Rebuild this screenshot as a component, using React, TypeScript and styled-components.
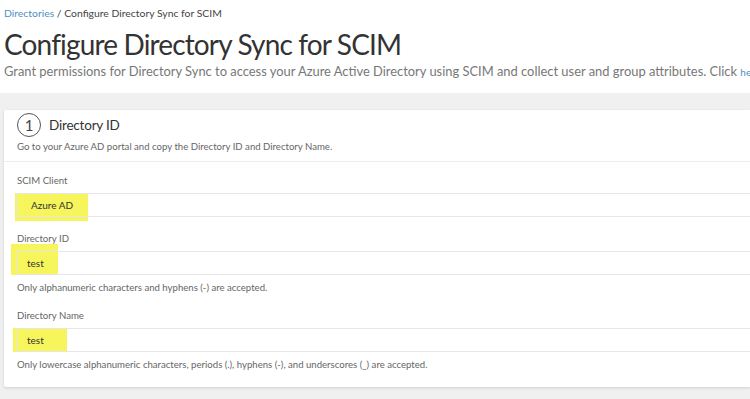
import React from 'react'
import styled, { createGlobalStyle } from 'styled-components'

const GlobalStyle = createGlobalStyle`
  body {
    margin: 0;
    background: #ffffff;
    font-family: 'Lato', 'Open Sans', sans-serif;
    overflow: hidden;
  }
`

type Mark = { left: number; top: number; width: number; height: number }

type FieldProps = {
  label: string
  value: string
  help?: string
  indent: number
  mark: Mark
}

function Field({ label, value, help, indent, mark }: FieldProps) {
  return (
    <FieldGroup>
      <Label>{label}</Label>
      <InputWrap>
        <Highlight $mark={mark} />
        <Input $indent={indent}>{value}</Input>
      </InputWrap>
      {help && <Help>{help}</Help>}
    </FieldGroup>
  )
}

function App() {
  return (
    <Page>
      <GlobalStyle />
      <Header>
        <Breadcrumb>
          <Crumb href='#'>Directories</Crumb> / Configure Directory Sync for SCIM
        </Breadcrumb>
        <Title>Configure Directory Sync for SCIM</Title>
        <Subtitle>
          Grant permissions for Directory Sync to access your Azure Active Directory using SCIM and
          collect user and group attributes. Click <HereLink href='#'>here</HereLink>
        </Subtitle>
      </Header>
      <Main>
        <Card>
          <CardHeader>
            <StepRow>
              <StepNumber>1</StepNumber>
              <StepTitle>Directory ID</StepTitle>
            </StepRow>
            <StepDesc>Go to your Azure AD portal and copy the Directory ID and Directory Name.</StepDesc>
          </CardHeader>
          <CardBody>
            <Field
              label='SCIM Client'
              value='Azure AD'
              indent={13}
              mark={{ left: -2, top: 0, width: 73, height: 28 }}
            />
            <Field
              label='Directory ID'
              value='test'
              indent={9}
              help='Only alphanumeric characters and hyphens (-) are accepted.'
              mark={{ left: -6, top: -7, width: 47, height: 31 }}
            />
            <Field
              label='Directory Name'
              value='test'
              indent={9}
              help='Only lowercase alphanumeric characters, periods (.), hyphens (-), and underscores (_) are accepted.'
              mark={{ left: -4, top: 0, width: 54, height: 24 }}
            />
          </CardBody>
        </Card>
      </Main>
    </Page>
  )
}

export default App

const Page = styled.div`
  width: 750px;
  height: 399px;
  overflow: hidden;
  display: flex;
  flex-direction: column;
`

const Header = styled.header`
  padding: 6px 0 0 4px;
  height: 93px;
  box-sizing: border-box;
  background: #ffffff;
`

const Breadcrumb = styled.div`
  font-size: 10.4px;
  color: #444;
  line-height: 14px;
`

const Crumb = styled.a`
  color: #4d8fc4;
  text-decoration: none;
`

const Title = styled.h1`
  margin: 6px 0 0;
  font-size: 28px;
  font-weight: 400;
  letter-spacing: -0.85px;
  color: #333;
  line-height: 36px;
  white-space: nowrap;
`

const Subtitle = styled.p`
  margin: 0;
  font-size: 12.9px;
  color: #777;
  line-height: 18px;
  white-space: nowrap;
`

const HereLink = styled.a`
  color: #4d8fc4;
  font-size: 10px;
  text-decoration: none;
`

const Main = styled.main`
  flex: 1;
  background: #f0f0f0;
  padding: 17px 0 0 4px;
`

const Card = styled.section`
  background: #ffffff;
  box-shadow: 0 1px 3px rgba(0, 0, 0, 0.14);
  border-radius: 2px 0 0 2px;
`

const CardHeader = styled.div`
  padding: 3px 13px 9px;
  border-bottom: 1px solid #ececec;
`

const StepRow = styled.div`
  display: flex;
  align-items: center;
  gap: 8px;
`

const StepNumber = styled.span`
  width: 22px;
  height: 22px;
  border: 1.5px solid #555;
  border-radius: 50%;
  display: flex;
  align-items: center;
  justify-content: center;
  font-size: 15px;
  color: #444;
`

const StepTitle = styled.span`
  font-size: 13.5px;
  letter-spacing: -0.2px;
  color: #333;
`

const StepDesc = styled.div`
  margin-top: 4px;
  font-size: 9.6px;
  color: #666;
`

const CardBody = styled.div`
  padding: 12px 0 16px 13px;
  display: flex;
  flex-direction: column;
  gap: 15px;
`

const FieldGroup = styled.div`
  display: flex;
  flex-direction: column;
`

const Label = styled.div`
  font-size: 9.6px;
  color: #666;
  line-height: 14px;
  margin-bottom: 5px;
`

const InputWrap = styled.div`
  position: relative;
`

const Highlight = styled.span<{ $mark: Mark }>`
  position: absolute;
  left: ${(p) => p.$mark.left}px;
  top: ${(p) => p.$mark.top}px;
  width: ${(p) => p.$mark.width}px;
  height: ${(p) => p.$mark.height}px;
  background: #f6f65c;
`

const Input = styled.div<{ $indent: number }>`
  position: relative;
  height: 24px;
  box-sizing: border-box;
  border: 1px solid #e6e6e6;
  border-right: none;
  padding: 0 0 0 ${(p) => p.$indent}px;
  display: flex;
  align-items: center;
  font-size: 10px;
  color: #333;
`

const Help = styled.div`
  margin-top: 6px;
  font-size: 9.6px;
  color: #666;
  line-height: 13px;
`
